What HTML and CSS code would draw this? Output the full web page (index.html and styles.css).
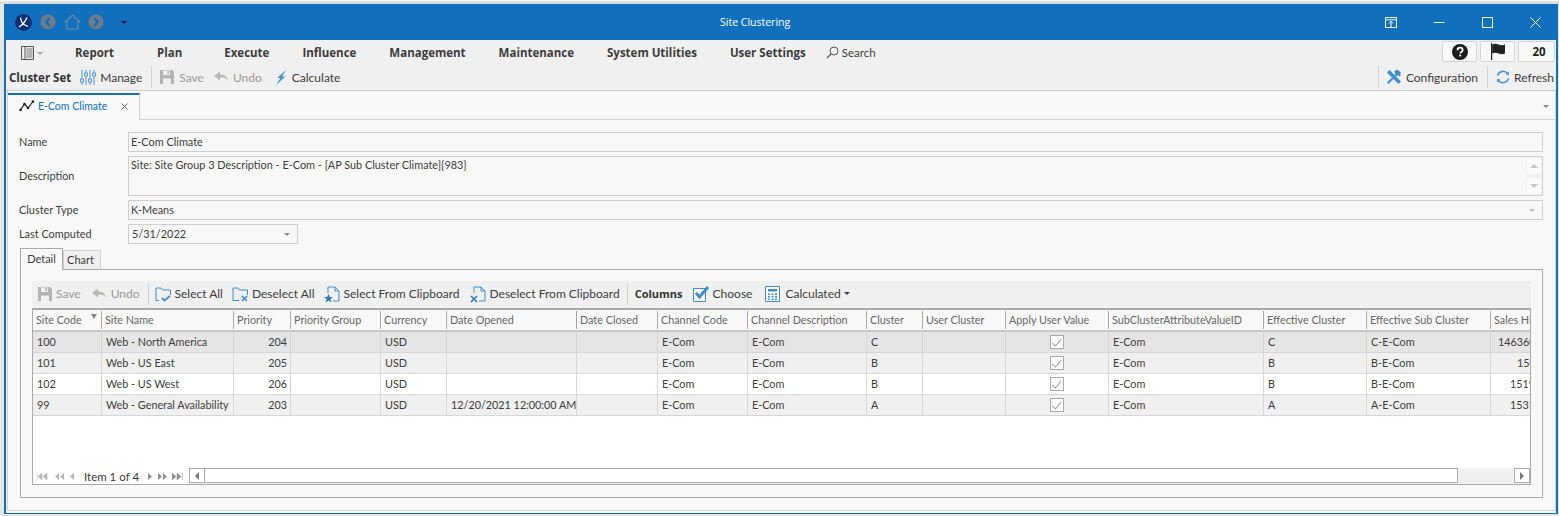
FILE: index.html
```html
<!DOCTYPE html>
<html lang="en">
<head>
<meta charset="UTF-8">
<meta name="viewport" content="width=device-width, initial-scale=1.0">
<title>Site Clustering</title>
<link rel="stylesheet" href="styles.css">
</head>
<body>

<svg class="defs" aria-hidden="true">
  <symbol id="i-save" viewBox="0 0 16 16"><path d="M1 1h12l2 2v12H1z" fill="#b4b4b4"/><path d="M4 1.500h7v4.500H4z" fill="#f0f0f0"/><path d="M4 9.500h8V15H4z" fill="#f0f0f0"/><path d="M8.500 2h1.500v3H8.500z" fill="#b4b4b4"/></symbol>
  <symbol id="i-undo" viewBox="0 0 16 16"><path d="M1 7l6-4.500v3c4 0 7 1.500 8 6-2-2.500-4.500-3-8-3v3z" fill="#b8b8b8"/></symbol>
  <symbol id="i-folder-check" viewBox="0 0 16 16"><path d="M4 14.500H1V2h5l1.500 2h8v5" fill="none" stroke="#3f8ccb"/><path d="M7 12l2.500 2.500L15 10" fill="none" stroke="#3f8ccb" stroke-width="1.800"/></symbol>
  <symbol id="i-folder-x" viewBox="0 0 16 16"><path d="M7 14.500H1V2h5l1.500 2h8v5" fill="none" stroke="#3f8ccb"/><path d="M10 10l5 5M15 10l-5 5" fill="none" stroke="#3f8ccb" stroke-width="1.600"/></symbol>
  <symbol id="i-page" viewBox="0 0 16 16"><path d="M4 7V1h7l4 4v10H9M11 1v4h4" fill="none" stroke="#3f8ccb"/></symbol>
</svg>

<div class="window">

  <div class="titlebar">
    <div class="quick">
      <svg class="logo" width="17" height="17" viewBox="0 0 17 17"><circle cx="8.500" cy="8.500" r="8.500" fill="#0f2f74"/><path d="M5.500 3.500c.5 3 1 5 2.500 6.500l5 2.500M12 3.500c-1 3-3 5-4 6.500l-4 3" fill="none" stroke="#fff" stroke-width="1.300"/></svg>
      <svg class="nav-back" width="16" height="16" viewBox="0 0 16 16"><circle cx="8" cy="8" r="7.500" fill="#6f7c87"/><path d="M9.800 4L6 8l3.800 4" fill="none" stroke="#1170be" stroke-width="2.400"/></svg>
      <svg class="nav-home" width="17" height="16" viewBox="0 0 17 16"><path d="M.8 8.500L8.500 1l7.700 7.500M3 7v8h11V7" fill="none" stroke="#6f8ca5" stroke-width="1.100"/></svg>
      <svg class="nav-next" width="16" height="16" viewBox="0 0 16 16"><circle cx="8" cy="8" r="7.500" fill="#6f7c87"/><path d="M6.200 4L10 8l-3.800 4" fill="none" stroke="#1170be" stroke-width="2.400"/></svg>
      <span class="caret caret-black"></span>
    </div>
    <div class="title">Site Clustering</div>
    <div class="winbtns">
      <svg class="win-pin" width="12" height="11" viewBox="0 0 12 11"><path d="M.5.500h11v10H.5zM.5 2.800h11M6 10V4.500M3.800 6.500L6 4.300l2.200 2.200" fill="none" stroke="#fff"/></svg>
      <svg class="win-min" width="11" height="11" viewBox="0 0 11 11"><path d="M0 5.500h10.500" stroke="#fff"/></svg>
      <svg class="win-max" width="11" height="11" viewBox="0 0 11 11"><path d="M.5.500h10v10H.5z" fill="none" stroke="#fff"/></svg>
      <svg class="win-close" width="11" height="11" viewBox="0 0 11 11"><path d="M.5.500l10 10M10.500.500l-10 10" stroke="#fff"/></svg>
    </div>
  </div>

  <div class="menubar">
    <svg class="menu-icon" width="14" height="14" viewBox="0 0 14 14"><path d="M.5.500h12v13H.5zM4 .500v13" fill="none" stroke="#555"/><path d="M5.500 3h6M5.500 5h6M5.500 7h6M5.500 9h6M5.500 11h6" stroke="#777"/></svg>
    <span class="caret caret-light menu-caret"></span>
    <nav class="menu">
      <a>Report</a>
      <a>Plan</a>
      <a>Execute</a>
      <a>Influence</a>
      <a>Management</a>
      <a>Maintenance</a>
      <a>System Utilities</a>
      <a>User Settings</a>
    </nav>
    <div class="search">
      <svg width="13" height="13" viewBox="0 0 13 13"><circle cx="8" cy="5" r="4" fill="none" stroke="#555"/><path d="M5 8l-4 4" stroke="#555" stroke-width="1.300"/></svg>
      <span>Search</span>
    </div>
    <div class="status">
      <div class="status-btn">
        <svg width="16" height="16" viewBox="0 0 16 16"><circle cx="8" cy="8" r="8" fill="#1c1c1c"/><path d="M5.400 6.200C5.500 4.600 6.600 3.700 8.100 3.700c1.500 0 2.600.9 2.600 2.200 0 1.100-.7 1.600-1.400 2.100-.6.400-.9.700-.9 1.400" fill="none" stroke="#fff" stroke-width="1.700"/><path d="M7.300 10.600h1.800v1.800H7.300z" fill="#fff"/></svg>
      </div>
      <div class="status-btn">
        <svg width="16" height="17" viewBox="0 0 16 17"><path d="M1 0h1.200v17H1z" fill="#222"/><path d="M2.200 1.500c2.500-1 4.500-1 6.500 0s4.300 1 6.300 0v9c-2 1-4.300 1-6.300 0s-4-1-6.500 0z" fill="#222"/></svg>
      </div>
      <div class="status-btn status-count">20</div>
    </div>
  </div>

  <div class="toolbar">
    <b class="tb-head">Cluster Set</b>
    <svg class="tb-icon manage-icon" width="16" height="15" viewBox="0 0 16 15"><path d="M2 0v15M6 0v15M10 0v15M14 0v15" stroke="#4b93cf" fill="none"/><path d="M.5 9h3v3h-3zM4.500 3h3v3h-3zM8.500 9h3v3h-3zM12.500 3h3v3h-3z" fill="#eef4fa" stroke="#4b93cf"/></svg>
    <span class="tb-text">Manage</span>
    <span class="tb-sep sep-manage"></span>
    <svg class="tb-icon save-icon" width="16" height="16"><use href="#i-save"/></svg>
    <span class="tb-text muted">Save</span>
    <svg class="tb-icon undo-icon" width="16" height="16"><use href="#i-undo"/></svg>
    <span class="tb-text muted">Undo</span>
    <svg class="tb-icon calc-icon" width="12" height="15" viewBox="0 0 12 15"><path d="M11 0L2 8h3.500L1 15l9.500-8.500H7z" fill="#4b93cf"/></svg>
    <span class="tb-text">Calculate</span>
    <div class="toolbar-right">
      <span class="tb-sep"></span>
      <svg class="tb-icon config-icon" width="16" height="16" viewBox="0 0 16 16"><path d="M1 13.500l9-9 1.500 1.500-9 9z" fill="#3f8ccb"/><path d="M1 3.500L3.500 1 15 12.500 12.500 15z" fill="#3f8ccb"/><path d="M8 2.500L11 .5l4 3-1 1 1 1.500-1.500 1.500L12 6l-1 1z" fill="#3f8ccb"/></svg>
      <span class="tb-text">Configuration</span>
      <span class="tb-sep sep-refresh"></span>
      <svg class="tb-icon refresh-icon" width="14" height="14" viewBox="0 0 14 14"><path d="M1.500 5.500A5.700 5.700 0 0 1 11.500 3.500M12.500 8.500A5.700 5.700 0 0 1 2.500 10.500" fill="none" stroke="#4b93cf" stroke-width="1.500"/><path d="M9.500 4.500L13 5V1.500zM4.500 9.500L1 9v3.500z" fill="#4b93cf"/></svg>
      <span class="tb-text">Refresh</span>
    </div>
  </div>

  <div class="doc-area">
    <div class="doc-tabs">
      <div class="doc-tab">
        <svg width="16" height="12" viewBox="0 0 16 12"><path d="M1.500 10l4-6 3.500 4L14 1.500" fill="none" stroke="#222" stroke-width="1.200"/><circle cx="1.500" cy="10" r="1.300" fill="#222"/><circle cx="5.500" cy="4" r="1.300" fill="#222"/><circle cx="9" cy="8" r="1.300" fill="#222"/><circle cx="14" cy="1.500" r="1.300" fill="#222"/></svg>
        <span class="doc-tab-name">E-Com Climate</span>
        <svg class="doc-tab-x" width="7" height="7" viewBox="0 0 7 7"><path d="M.5.500l6 6M6.500.500l-6 6" stroke="#666"/></svg>
      </div>
      <span class="caret caret-grey doc-menu"></span>
    </div>

    <div class="form">
      <div class="field-row">
        <label>Name</label>
        <div class="field">E-Com Climate</div>
      </div>
      <div class="field-row row-desc">
        <label>Description</label>
        <div class="field field-desc">
          <span>Site: Site Group 3 Description - E-Com - [AP Sub Cluster Climate]{983}</span>
          <div class="spin">
            <div class="spin-btn"><span class="caret caret-up"></span></div>
            <div class="spin-btn"><span class="caret caret-pale"></span></div>
          </div>
        </div>
      </div>
      <div class="field-row">
        <label>Cluster Type</label>
        <div class="field field-drop">K-Means<span class="caret caret-pale"></span></div>
      </div>
      <div class="field-row">
        <label>Last Computed</label>
        <div class="field field-drop field-date">5/31/2022<span class="caret caret-grey"></span></div>
      </div>
    </div>

    <div class="tabs">
      <div class="tab tab-on">Detail</div>
      <div class="tab tab-off">Chart</div>
    </div>

    <div class="tab-panel">
      <div class="grid-toolbar">
        <svg class="tb-icon g-save" width="16" height="16"><use href="#i-save"/></svg>
        <span class="tb-text muted">Save</span>
        <svg class="tb-icon g-undo" width="16" height="16"><use href="#i-undo"/></svg>
        <span class="tb-text muted">Undo</span>
        <span class="tb-sep g-sep1"></span>
        <svg class="tb-icon" width="16" height="16"><use href="#i-folder-check"/></svg>
        <span class="tb-text">Select All</span>
        <svg class="tb-icon g-next" width="16" height="16"><use href="#i-folder-x"/></svg>
        <span class="tb-text">Deselect All</span>
        <span class="clip-icon g-next">
          <svg width="16" height="16"><use href="#i-page"/></svg>
          <svg class="clip-mark" width="9" height="9" viewBox="0 0 9 9"><path d="M4.500 0l1.300 3H9L6.400 5l1 3.500-2.900-2-2.900 2 1-3.500L0 3h3.200z" fill="#2a74b8"/></svg>
        </span>
        <span class="tb-text">Select From Clipboard</span>
        <span class="clip-icon g-wide">
          <svg width="16" height="16"><use href="#i-page"/></svg>
          <svg class="clip-mark" width="8" height="8" viewBox="0 0 8 8"><path d="M1 1l6 6M7 1L1 7" stroke="#2a74b8" stroke-width="1.600"/></svg>
        </span>
        <span class="tb-text">Deselect From Clipboard</span>
        <span class="tb-sep g-sep2"></span>
        <b class="tb-bold">Columns</b>
        <svg class="tb-icon g-choose" width="16" height="16" viewBox="0 0 16 16"><path d="M.5 2.500h12v13H.5z" fill="#fff" stroke="#3f8ccb"/><path d="M3 7l3.500 4L15 1" fill="none" stroke="#3f8ccb" stroke-width="3"/></svg>
        <span class="tb-text">Choose</span>
        <svg class="tb-icon g-calc" width="15" height="16" viewBox="0 0 15 16"><path d="M.5.500h14v15H.5z" fill="#fff" stroke="#3f8ccb"/><path d="M3 3h9v2.500H3z" fill="#3f8ccb"/><path d="M3 7.500h2v1.500H3zM6.500 7.500h2v1.500h-2zM10 7.500h2v1.500h-2zM3 10h2v1.500H3zM6.500 10h2v1.500h-2zM10 10h2v1.500h-2zM3 12.500h2V14H3zM6.500 12.500h2V14h-2zM10 12.500h2V14h-2z" fill="#3f8ccb"/></svg>
        <span class="tb-text">Calculated</span>
        <span class="caret caret-small"></span>
      </div>

      <div class="grid-frame">
        <div class="grid-scroll">
          <table class="grid">
            <colgroup>
              <col class="c69"><col class="c132"><col class="c57"><col class="c90"><col class="c66">
              <col class="c130"><col class="c81"><col class="c90"><col class="c119"><col class="c56">
              <col class="c83"><col class="c103"><col class="c155"><col class="c103"><col class="c124"><col class="c100">
            </colgroup>
            <thead>
              <tr>
                <th><span>Site Code</span><i class="filter"></i></th><th><span>Site Name</span></th><th><span>Priority</span></th><th><span>Priority Group</span></th><th><span>Currency</span></th>
                <th><span>Date Opened</span></th><th><span>Date Closed</span></th><th><span>Channel Code</span></th><th><span>Channel Description</span></th><th><span>Cluster</span></th>
                <th><span>User Cluster</span></th><th><span>Apply User Value</span></th><th><span>SubClusterAttributeValueID</span></th><th><span>Effective Cluster</span></th><th><span>Effective Sub Cluster</span></th><th><span>Sales History</span></th>
              </tr>
            </thead>
            <tbody>
              <tr class="row-sel">
                <td>100</td><td>Web - North America</td><td class="num">204</td><td></td><td>USD</td><td></td><td></td><td>E-Com</td><td>E-Com</td><td>C</td><td></td><td class="chk"><i class="check"></i></td><td>E-Com</td><td>C</td><td>C-E-Com</td><td class="sales sales-a">146360</td>
              </tr>
              <tr class="row-alt">
                <td>101</td><td>Web - US East</td><td class="num">205</td><td></td><td>USD</td><td></td><td></td><td>E-Com</td><td>E-Com</td><td>B</td><td></td><td class="chk"><i class="check"></i></td><td>E-Com</td><td>B</td><td>B-E-Com</td><td class="sales sales-b">150</td>
              </tr>
              <tr>
                <td>102</td><td>Web - US West</td><td class="num">206</td><td></td><td>USD</td><td></td><td></td><td>E-Com</td><td>E-Com</td><td>B</td><td></td><td class="chk"><i class="check"></i></td><td>E-Com</td><td>B</td><td>B-E-Com</td><td class="sales sales-c">1519</td>
              </tr>
              <tr class="row-alt">
                <td>99</td><td>Web - General Availability</td><td class="num">203</td><td></td><td>USD</td><td>12/20/2021 12:00:00 AM</td><td></td><td>E-Com</td><td>E-Com</td><td>A</td><td></td><td class="chk"><i class="check"></i></td><td>E-Com</td><td>A</td><td>A-E-Com</td><td class="sales sales-c">1531</td>
              </tr>
            </tbody>
          </table>
        </div>
        <div class="grid-foot">
          <div class="pager">
            <svg width="12" height="7" viewBox="0 0 12 7"><path d="M1 0v7M6 0L2 3.500 6 7zM11 0L7 3.500l4 3.500z" fill="#b5b5b5" stroke="#b5b5b5" stroke-width=".5"/></svg>
            <svg class="pg-gap" width="10" height="7" viewBox="0 0 10 7"><path d="M5 0L1 3.500 5 7zM10 0L6 3.500l4 3.500z" fill="#b5b5b5"/></svg>
            <svg class="pg-gap" width="5" height="7" viewBox="0 0 5 7"><path d="M4 0L0 3.500 4 7z" fill="#b5b5b5"/></svg>
            <span class="pager-text">Item 1 of 4</span>
            <svg width="5" height="7" viewBox="0 0 5 7"><path d="M1 0l4 3.500L1 7z" fill="#8f8f8f"/></svg>
            <svg class="pg-gap" width="10" height="7" viewBox="0 0 10 7"><path d="M0 0l4 3.500L0 7zM5 0l4 3.500L5 7z" fill="#8f8f8f"/></svg>
            <svg class="pg-gap2" width="12" height="7" viewBox="0 0 12 7"><path d="M0 0l4 3.500L0 7zM5 0l4 3.500L5 7zM10.500 0v7" fill="#8f8f8f" stroke="#8f8f8f" stroke-width=".5"/></svg>
          </div>
          <div class="hscroll">
            <div class="hs-btn"><span class="tri-left"></span></div>
            <div class="hs-thumb"></div>
            <div class="hs-track"></div>
            <div class="hs-btn"><span class="tri-right"></span></div>
          </div>
        </div>
      </div>
    </div>
  </div>
</div>

</body>
</html>
```

FILE: styles.css
```css
* {
  box-sizing: border-box;
}
html, body {
  margin: 0;
  height: 516px;
  overflow: hidden;
}
body {
  font-family: "Lato", "Open Sans", Arial, sans-serif;
  font-size: 12px;
  color: #3c3c3c;
  background: linear-gradient(#fff, #cfcfcf 3px, #e6e6e6 4px);
  padding: 4px 1px 0 4px;
}
.defs {
  display: none;
}
svg {
  display: block;
  flex: none;
}
.window {
  width: 1554px;
  height: 510px;
  display: flex;
  flex-direction: column;
  background: #f0f0f0;
  border: solid #1170be;
  border-width: 0 2px 1px 2px;
}

/* carets */
.caret {
  width: 0;
  height: 0;
  display: inline-block;
  border-left: 4px solid transparent;
  border-right: 4px solid transparent;
  border-top: 4px solid #888;
}
.caret-black {
  border-top-color: #111;
  border-left-width: 3px;
  border-right-width: 3px;
  border-top-width: 3px;
}
.caret-light {
  border-top-color: #aaa;
  border-left-width: 3px;
  border-right-width: 3px;
  border-top-width: 3px;
}
.caret-grey {
  border-top-color: #888;
}
.caret-pale {
  border-top-color: #c4c4c4;
}
.caret-up {
  border-top: 0;
  border-bottom: 4px solid #c4c4c4;
}
.caret-small {
  margin-left: 3px;
  border-top-color: #444;
  border-left-width: 3px;
  border-right-width: 3px;
  border-top-width: 3px;
}

/* title bar */
.titlebar {
  height: 36px;
  background: #1170be;
  display: flex;
  align-items: center;
  flex: none;
}
.quick {
  width: 714px;
  display: flex;
  align-items: center;
  padding-left: 9px;
}
.nav-back {
  margin-left: 8px;
}
.nav-home {
  margin-left: 8px;
}
.nav-next {
  margin-left: 7px;
}
.quick .caret {
  margin-left: 17px;
}
.title {
  color: #fff;
  font-family: "Open Sans", Arial, sans-serif;
  font-size: 10.500px;
  width: 665px;
}
.winbtns {
  display: flex;
  align-items: center;
}
.win-min {
  margin-left: 37px;
}
.win-max {
  margin-left: 37px;
}
.win-close {
  margin-left: 37px;
}

/* menu */
.menubar {
  height: 26px;
  display: flex;
  align-items: center;
  flex: none;
  padding-left: 15px;
}
.menu-caret {
  margin-left: 2px;
}
.menu {
  display: flex;
  gap: 33px;
  margin-left: 32px;
  margin-top: -2px;
  font-family: "Open Sans", Arial, sans-serif;
  font-weight: 700;
  font-size: 11.500px;
}
.menu a:nth-child(1) {
  margin-right: 10px;
}
.menu a:nth-child(2) {
  margin-right: 9px;
}
.search {
  display: flex;
  align-items: center;
  gap: 3px;
  margin-left: 20px;
  margin-top: -2px;
  font-size: 11.500px;
}
.status {
  margin-left: auto;
  margin-right: 1px;
  display: flex;
  gap: 3px;
  margin-top: -3px;
}
.status-btn {
  width: 35px;
  height: 21px;
  background: #f8f8f8;
  border: 1px solid #d4d4d4;
  border-radius: 2px;
  display: flex;
  align-items: center;
  justify-content: center;
}
.status-count {
  width: 37px;
  font-family: "Open Sans", Arial, sans-serif;
  font-size: 11.500px;
  font-weight: 700;
  color: #222;
  padding-left: 5px;
}

/* toolbars */
.toolbar {
  height: 25px;
  flex: none;
  display: flex;
  align-items: center;
  padding: 0 2px 2px 3px;
  border-bottom: 1px solid #cdcdcd;
}
.tb-head {
  color: #333;
  font-family: "Open Sans", Arial, sans-serif;
  font-size: 11.500px;
}
.tb-bold {
  color: #333;
  font-family: "Open Sans", Arial, sans-serif;
  font-size: 11px;
}
.tb-icon {
  margin-right: 4px;
}
.tb-text {
  white-space: nowrap;
}
.muted {
  color: #999;
}
.tb-sep {
  width: 1px;
  height: 22px;
  background: #cfcfcf;
}
.manage-icon {
  margin-left: 9px;
}
.sep-manage {
  margin: 0 7px 0 9px;
}
.undo-icon {
  margin-left: 9px;
}
.calc-icon {
  margin-left: 13px;
  margin-right: 5px;
}
.toolbar-right {
  margin-left: auto;
  display: flex;
  align-items: center;
}
.config-icon {
  margin-left: 7px;
  margin-right: 4px;
}
.sep-refresh {
  margin: 0 8px 0 9px;
}

/* document tab */
.doc-area {
  flex: 1;
  min-height: 0;
  background: #f8f8f8;
  border: solid #d2d2d2;
  border-width: 0 1px 1px 1px;
  margin-left: 1px;
  margin-bottom: 2px;
  box-shadow: 0 2px 0 #f8f8f8;
}
.doc-tabs {
  height: 29px;
  display: flex;
  align-items: flex-end;
  border-bottom: 1px solid #d2d2d2;
}
.doc-tab {
  width: 132px;
  height: 27px;
  margin-bottom: -1px;
  background: #f8f8f8;
  border-top: 2px solid #1170be;
  border-right: 1px solid #d2d2d2;
  display: flex;
  align-items: center;
  padding: 0 0 4px 11px;
}
.doc-tab-name {
  margin-left: 3px;
  color: #1170be;
  font-size: 10.500px;
}
.doc-tab-x {
  margin-left: auto;
  margin-right: 11px;
  margin-top: 2px;
}
.doc-menu {
  margin-left: auto;
  margin-right: 6px;
  margin-bottom: 11px;
  border-left-width: 3px;
  border-right-width: 3px;
  border-top-width: 3px;
}

/* form */
.form {
  padding: 12px 12px 0 11px;
  font-size: 10.900px;
}
.field-row {
  display: flex;
  align-items: center;
  height: 20px;
  margin-bottom: 4px;
}
.row-desc {
  height: 40px;
}
.field-row label {
  width: 109px;
  flex: none;
  padding-bottom: 1px;
}
.field {
  flex: 1;
  height: 100%;
  border: 1px solid #cfcfcf;
  padding: 1px 2px;
  line-height: 16px;
  display: flex;
  align-items: flex-start;
  justify-content: space-between;
}
.field-desc {
  padding: 0 0 0 2px;
}
.spin {
  width: 16px;
  height: 38px;
  background: #f0f0f0;
  padding: 1px;
  display: flex;
  flex-direction: column;
  justify-content: space-between;
}
.spin-btn {
  height: 16px;
  background: #fbfbfb;
  display: flex;
  align-items: center;
  justify-content: center;
}
.field-drop {
  align-items: center;
  padding-right: 7px;
}
.field-drop .caret {
  border-left-width: 3px;
  border-right-width: 3px;
  border-top-width: 3px;
}
.field-date {
  flex: none;
  width: 170px;
  padding-left: 3px;
}

/* tabs */
.tabs {
  display: flex;
  align-items: flex-end;
  height: 21px;
  margin-left: 12px;
  position: relative;
  z-index: 1;
  font-size: 11px;
}
.tab {
  height: 19px;
  width: 38px;
  background: #f0f0f0;
  border: 1px solid #cfcfcf;
  border-bottom: 0;
  text-align: center;
  line-height: 18px;
}
.tab-off {
  padding-right: 3px;
}
.tab-on {
  width: 43px;
  height: 22px;
  background: #f8f8f8;
  border-color: #aaa;
  margin-bottom: -1px;
  line-height: 19px;
}
.tab-panel {
  width: 1523px;
  height: 229px;
  margin-left: 12px;
  border: 1px solid #aaa;
  padding: 11px;
}

/* grid toolbar */
.grid-toolbar {
  height: 27px;
  background: #f0f0f0;
  display: flex;
  align-items: center;
  padding: 0 0 2px 5px;
}
.g-save {
  margin-right: 3px;
}
.g-undo {
  margin-left: 10px;
}
.g-sep1 {
  margin: 0 6px 0 8px;
}
.g-next {
  margin-left: 9px;
}
.g-wide {
  margin-left: 10px;
}
.clip-icon {
  position: relative;
  width: 16px;
  height: 16px;
  margin-right: 4px;
}
.clip-mark {
  position: absolute;
  left: 0;
  bottom: -1px;
}
.g-sep2 {
  margin: 0 7px;
}
.g-choose {
  margin-left: 10px;
}
.g-calc {
  margin-left: 13px;
  margin-right: 5px;
}

/* grid */
.grid-frame {
  width: 1499px;
  height: 177px;
  border: 1px solid #aaa;
  border-top-width: 2px;
  background: #fff;
  display: flex;
  flex-direction: column;
  font-size: 10.800px;
}
.grid-scroll {
  flex: 1;
  min-height: 0;
  overflow: hidden;
}
.grid {
  table-layout: fixed;
  width: 1558px;
  border-collapse: separate;
  border-spacing: 0;
}
.c69 { width: 69px; }
.c132 { width: 132px; }
.c57 { width: 57px; }
.c90 { width: 90px; }
.c66 { width: 66px; }
.c130 { width: 130px; }
.c81 { width: 81px; }
.c119 { width: 119px; }
.c56 { width: 56px; }
.c83 { width: 83px; }
.c103 { width: 103px; }
.c155 { width: 155px; }
.c124 { width: 124px; }
.c100 { width: 100px; }
.grid th {
  height: 22px;
  background: #f8f8f8;
  font-weight: 400;
  text-align: left;
  padding: 1px 0;
  color: #666;
  border-bottom: 2px solid #c8c8c8;
  position: relative;
  white-space: nowrap;
  overflow: hidden;
}
.grid th span {
  display: block;
  height: 18px;
  line-height: 17px;
  padding-left: 3px;
  border-right: 1px solid #aaa;
}
.grid td {
  height: 21px;
  padding: 0 3px 1px 4px;
  border-right: 1px solid #d6d6d6;
  border-bottom: 1px solid #d6d6d6;
  white-space: nowrap;
  overflow: hidden;
}
.grid td.num {
  text-align: right;
}
.grid td.sales {
  padding-right: 0;
}
.grid td.sales-a {
  padding-left: 7px;
}
.grid td.sales-b {
  padding-left: 26px;
}
.grid td.sales-c {
  padding-left: 19px;
}
.row-sel td {
  background: #e5e5e5;
}
.row-alt td {
  background: #f0f0f0;
}
.filter {
  position: absolute;
  right: 5px;
  top: 4px;
  width: 0;
  height: 0;
  border-left: 3px solid transparent;
  border-right: 3px solid transparent;
  border-top: 5px solid #888;
}
.grid td.chk {
  padding: 0;
}
.check {
  display: block;
  width: 14px;
  height: 14px;
  margin: 0 auto;
  border: 1px solid #aaa;
  background: #fff;
  position: relative;
}
.check::after {
  content: "";
  position: absolute;
  left: 3px;
  top: 1px;
  width: 4px;
  height: 8px;
  border: solid #999;
  border-width: 0 1px 1px 0;
  transform: rotate(40deg);
}

/* footer */
.grid-foot {
  height: 16px;
  display: flex;
  flex: none;
  align-items: center;
}
.pager {
  width: 156px;
  display: flex;
  align-items: center;
  padding-left: 3px;
}
.pg-gap {
  margin-left: 6px;
}
.pg-gap2 {
  margin-left: 4px;
}
.pager-text {
  margin: 0 8px 0 9px;
  white-space: nowrap;
  font-size: 11.500px;
}
.hscroll {
  flex: 1;
  height: 16px;
  display: flex;
  background: #f0f0f0;
}
.hs-btn {
  width: 16px;
  height: 15px;
  background: #fff;
  border: 1px solid #aaa;
  display: flex;
  align-items: center;
  justify-content: center;
}
.hs-thumb {
  width: 1253px;
  height: 15px;
  background: #fff;
  border: 1px solid #aaa;
  border-left: 0;
}
.hs-track {
  flex: 1;
}
.tri-left, .tri-right {
  width: 0;
  height: 0;
  border-top: 4px solid transparent;
  border-bottom: 4px solid transparent;
}
.tri-left {
  border-right: 4px solid #777;
}
.tri-right {
  border-left: 4px solid #777;
}
```
